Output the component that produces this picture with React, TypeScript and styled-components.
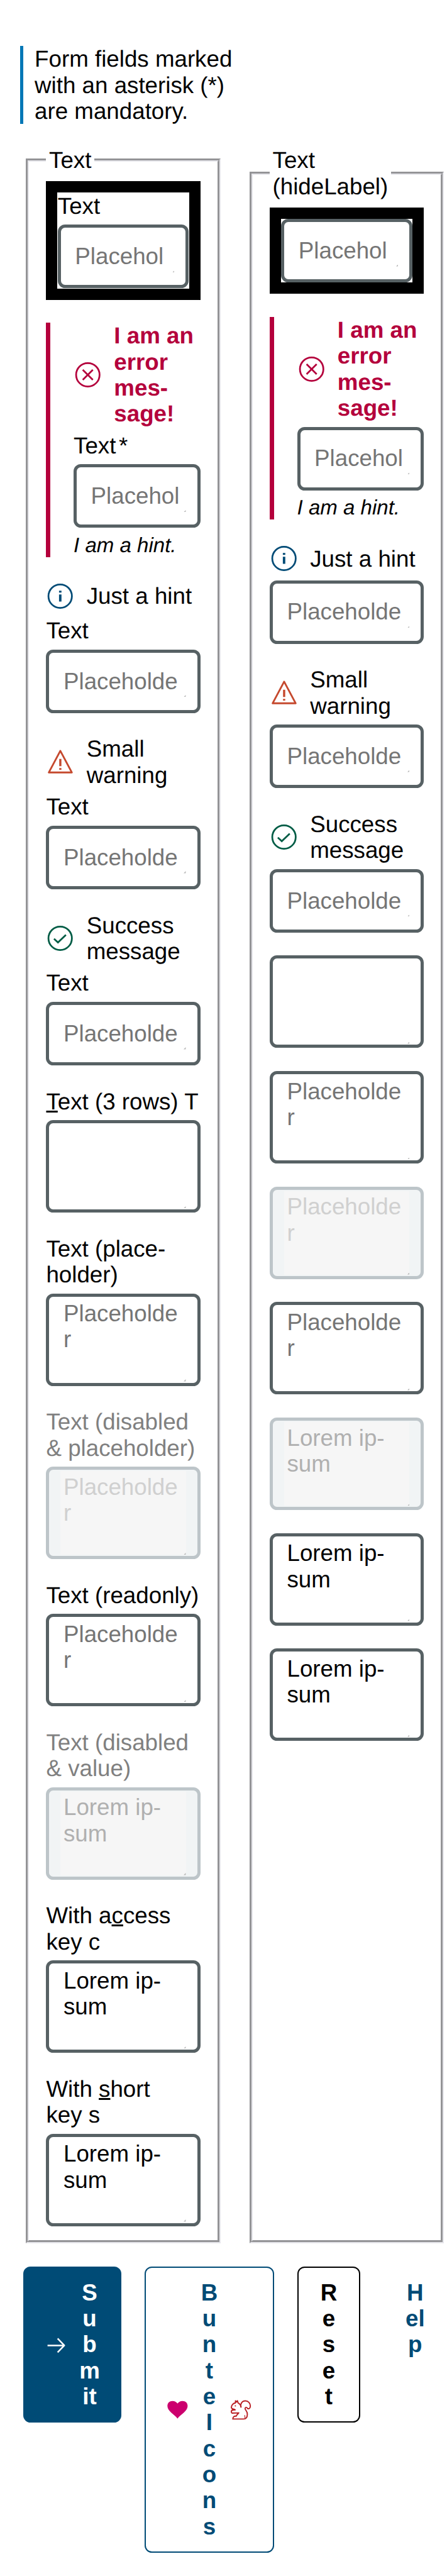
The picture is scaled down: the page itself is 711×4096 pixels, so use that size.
import React from "react";
import styled, { createGlobalStyle, css } from "styled-components";

/* Design units are laid out at a fixed scale of 0.574. */
const SCALE = 0.574;
const u = (n: number) => `${+(n * SCALE).toFixed(3)}px`;

const color = {
  text: "#000000",
  field: "#576164",
  fieldDisabled: "#bdc5c9",
  placeholder: "#757575",
  primary: "#004b76",
  accent: "#0077b6",
  error: "#b4003c",
  warning: "#c5492e",
  success: "#005c45",
};

const GlobalStyle = createGlobalStyle`
  *, *::before, *::after { box-sizing: border-box; }
  body {
    margin: 0;
    background: #ffffff;
    color: ${color.text};
    font-family: "Liberation Sans", Arial, sans-serif;
    font-size: ${u(64)};
    line-height: ${u(72)};
    text-rendering: geometricPrecision;
  }
`;

const Page = styled.main`
  display: flex;
  flex-direction: column;
  gap: ${u(64)};
  padding: ${u(128)} 0 ${u(64)} ${u(56)};
`;

const Notice = styled.p`
  margin: 0;
  width: ${u(620)};
  border-left: 5px solid ${color.accent};
  padding-left: calc(${u(40)} - 5px);
`;

const Columns = styled.form`
  display: grid;
  grid-template-columns: minmax(0, 1fr) minmax(0, 1fr);
  column-gap: ${u(80)};
  padding: 0 ${u(8)} 0 ${u(16)};
`;

const Group = styled.fieldset`
  display: block;
  min-width: 0;
  margin: 0;
  border: 5px groove #e6e6eb;
  padding: ${u(22.4)} calc(${u(56)} - 5px) calc(${u(48)} - 5px);
`;

const GroupTitle = styled.legend`
  padding: 0 ${u(8)};
`;

const Stack = styled.div`
  display: flex;
  flex-direction: column;
  gap: ${u(64)};
`;

const Field = styled.div<{ $state?: "focus" | "error" }>`
  display: flex;
  flex-direction: column;
  gap: ${u(16)};
  ${(p) =>
    p.$state === "focus" &&
    css`
      border: 18px solid #000;
      padding: calc(${u(32)} - 18px);
    `}
  ${(p) =>
    p.$state === "error" &&
    css`
      border-left: 7px solid ${color.error};
      padding-left: calc(${u(76)} - 7px);
    `}
`;

const Label = styled.label<{ $disabled?: boolean }>`
  white-space: nowrap;
  color: ${(p) => (p.$disabled ? "#808080" : "inherit")};
`;

const Required = styled.span`
  margin-left: ${u(8)};
`;

const AccessKey = styled.u`
  text-decoration: underline;
`;

const Hint = styled.p`
  margin: 0;
  font-size: ${u(57.6)};
  font-style: italic;
  line-height: ${u(65.6)};
  white-space: nowrap;
`;

const Message = styled.div<{ $strong?: boolean }>`
  display: flex;
  align-items: center;
  gap: ${u(32)};
  min-height: ${u(87.4)};
  color: ${(p) => (p.$strong ? color.error : "inherit")};
  font-weight: ${(p) => (p.$strong ? 700 : 400)};
`;

const MessageText = styled.span`
  flex: none;
  white-space: nowrap;
`;

const Icon = styled.svg<{ $w: number }>`
  flex: none;
  width: ${(p) => u(p.$w)};
  height: ${u(80)};
  overflow: visible;
`;

const Box = styled.div<{ $rows: number; $disabled?: boolean }>`
  position: relative;
  display: flex;
  align-items: center;
  height: ${(p) => (p.$rows === 1 ? u(176) : u(256))};
  border: 5px solid ${(p) => (p.$disabled ? color.fieldDisabled : color.field)};
  border-radius: ${u(20)};
  padding: 0 calc(${u(40)} - 5px);
  background: ${(p) => (p.$disabled ? "#f1f4f5" : "#fff")};
`;

const Area = styled.textarea`
  display: block;
  width: 100%;
  height: ${(p) => u((p.rows ?? 1) * 72 + 16)};
  margin: 0;
  border: 0;
  outline: 0;
  padding: ${u(8)};
  background: transparent;
  color: inherit;
  font: inherit;
  overflow: hidden;
  resize: none;
  &::placeholder {
    color: ${color.placeholder};
    opacity: 1;
  }
  &:disabled {
    background: #f6f6f6;
    color: #b0b0b0;
  }
  &:disabled::placeholder {
    color: #d0d0d0;
  }
`;

const Grip = styled.svg<{ $rows: number }>`
  position: absolute;
  right: calc(${u(40)} - 5px);
  bottom: calc(${(p) => (p.$rows === 1 ? u(44) : u(12))} - 5px);
  width: ${u(6)};
  height: ${u(6)};
`;

const Actions = styled.div`
  display: flex;
  align-items: flex-start;
  gap: ${u(64)};
  padding-left: ${u(8)};
`;

const Button = styled.button<{ $w: number; $kind: "primary" | "outline" | "plain" | "ghost" }>`
  display: flex;
  flex: none;
  align-items: center;
  justify-content: center;
  gap: ${u(32)};
  width: ${(p) => u(p.$w)};
  margin: 0;
  border: ${(p) => (p.$kind === "plain" ? "2px" : "2.3px")} solid
    ${(p) => (p.$kind === "ghost" ? "transparent" : p.$kind === "plain" ? "#000" : color.primary)};
  border-radius: ${u(20)};
  padding: calc(${u(36)} - 2px) 0;
  background: ${(p) => (p.$kind === "primary" ? color.primary : "transparent")};
  color: ${(p) => (p.$kind === "primary" ? "#fff" : p.$kind === "plain" ? "#000" : color.primary)};
  font: inherit;
  font-weight: 700;
`;

const Word = styled.span<{ $w: number }>`
  flex: none;
  width: ${(p) => u(p.$w)};
  text-align: center;
  word-break: break-all;
`;

type Kind = "error" | "info" | "warning" | "success";

function MessageIcon({ kind }: { kind: Kind }) {
  if (kind === "warning") {
    return (
      <Icon $w={80} viewBox="0 0 80 80">
        <path d="M40 8.5 8 68.5H72Z" fill="none" stroke={color.warning} strokeWidth="5" strokeLinejoin="round" />
        <path d="M37 31h6v20h-6zM37 56h6v5h-6z" fill={color.warning} />
      </Icon>
    );
  }
  return (
    <Icon $w={80} viewBox="0 0 80 80">
      <circle cx="39.6" cy="40" r="32.5" fill="none" stroke={color[kind === "info" ? "primary" : kind]} strokeWidth="4.8" />
      {kind === "error" && (
        <path d="M25.5 26 53.5 54M53.5 26 25.5 54" fill="none" stroke={color.error} strokeWidth="4.8" />
      )}
      {kind === "info" && <path d="M36.4 25h6.8v5.2h-6.8zM36.4 35.2h6.8V55h-6.8z" fill={color.primary} />}
      {kind === "success" && (
        <path d="M22.5 41.5 33.5 51.5 55.5 30.5" fill="none" stroke={color.success} strokeWidth="4.8" />
      )}
    </Icon>
  );
}

function StatusMessage({ kind, lines }: { kind: Kind; lines: string[] }) {
  return (
    <Message $strong={kind === "error"}>
      <MessageIcon kind={kind} />
      <MessageText>
        {lines.map((line, i) => (
          <React.Fragment key={i}>
            {i > 0 && <br />}
            {line}
          </React.Fragment>
        ))}
      </MessageText>
    </Message>
  );
}

type AreaFieldProps = {
  label?: React.ReactNode;
  rows?: number;
  placeholder?: string;
  value?: string;
  disabled?: boolean;
  readOnly?: boolean;
  state?: "focus" | "error";
  message?: { kind: Kind; lines: string[] };
  hint?: string;
};

function AreaField({ label, rows = 3, placeholder, value, disabled, readOnly, state, message, hint }: AreaFieldProps) {
  return (
    <Field $state={state}>
      {message && <StatusMessage {...message} />}
      {label && <Label $disabled={disabled}>{label}</Label>}
      <Box $rows={rows} $disabled={disabled}>
        <Area rows={rows} placeholder={placeholder} defaultValue={value} disabled={disabled} readOnly={readOnly} />
        <Grip $rows={rows} viewBox="0 0 6 6">
          <path d="M6 0V6H0Z" fill="#b8b8b8" />
        </Grip>
      </Box>
      {hint && <Hint>{hint}</Hint>}
    </Field>
  );
}

const PLACEHOLDER = "Placeholder";
const LOREM = "Lorem ip\u00adsum";

const messages = {
  error: { kind: "error" as Kind, lines: ["I am an", "error", "mes-", "sage!"] },
  info: { kind: "info" as Kind, lines: ["Just a hint"] },
  warning: { kind: "warning" as Kind, lines: ["Small", "warning"] },
  success: { kind: "success" as Kind, lines: ["Success", "message"] },
};

export default function App() {
  return (
    <>
      <GlobalStyle />
      <Page>
        <Notice>
          Form fields marked
          <br />
          with an asterisk (*)
          <br />
          are mandatory.
        </Notice>
        <Columns>
          <Group>
            <GroupTitle>Text</GroupTitle>
            <Stack>
              <AreaField state="focus" rows={1} label="Text" placeholder={PLACEHOLDER} />
              <AreaField
                state="error"
                rows={1}
                message={messages.error}
                label={
                  <>
                    Text<Required>*</Required>
                  </>
                }
                placeholder={PLACEHOLDER}
                hint="I am a hint."
              />
              <AreaField rows={1} message={messages.info} label="Text" placeholder={PLACEHOLDER} />
              <AreaField rows={1} message={messages.warning} label="Text" placeholder={PLACEHOLDER} />
              <AreaField rows={1} message={messages.success} label="Text" placeholder={PLACEHOLDER} />
              <AreaField
                label={
                  <>
                    <AccessKey>T</AccessKey>ext (3 rows) T
                  </>
                }
              />
              <AreaField label={<>Text (place-<br />holder)</>} placeholder={PLACEHOLDER} />
              <AreaField label={<>Text (disabled<br />&amp; placeholder)</>} placeholder={PLACEHOLDER} disabled />
              <AreaField label="Text (readonly)" placeholder={PLACEHOLDER} readOnly />
              <AreaField label={<>Text (disabled<br />&amp; value)</>} value={LOREM} disabled />
              <AreaField label={<>With a<AccessKey>c</AccessKey>cess<br />key c</>} value={LOREM} />
              <AreaField label={<>With <AccessKey>s</AccessKey>hort<br />key s</>} value={LOREM} />
            </Stack>
          </Group>
          <Group>
            <GroupTitle>
              Text
              <br />
              (hideLabel)
            </GroupTitle>
            <Stack>
              <AreaField state="focus" rows={1} placeholder={PLACEHOLDER} />
              <AreaField state="error" rows={1} message={messages.error} placeholder={PLACEHOLDER} hint="I am a hint." />
              <AreaField rows={1} message={messages.info} placeholder={PLACEHOLDER} />
              <AreaField rows={1} message={messages.warning} placeholder={PLACEHOLDER} />
              <AreaField rows={1} message={messages.success} placeholder={PLACEHOLDER} />
              <AreaField />
              <AreaField placeholder={PLACEHOLDER} />
              <AreaField placeholder={PLACEHOLDER} disabled />
              <AreaField placeholder={PLACEHOLDER} readOnly />
              <AreaField value={LOREM} disabled />
              <AreaField value={LOREM} />
              <AreaField value={LOREM} />
            </Stack>
          </Group>
        </Columns>
        <Actions>
          <Button $kind="primary" $w={272.6}>
            <Icon $w={64} viewBox="0 0 64 80">
              <path d="M8 42.5H55M36 23.5 54.5 42.5 36 61.5" fill="none" stroke="#fff" strokeWidth="4.4" strokeLinejoin="round" />
            </Icon>
            <Word $w={57.5}>Submit</Word>
          </Button>
          <Button $kind="outline" $w={358.8}>
            <Icon $w={64} viewBox="0 0 64 80">
              <path
                d="M32 66C24 54 4 46 4 31C4 22 10 17 18 17C25 17 29 20 32 24C35 20 39 17 46 17C54 17 60 22 60 31C60 46 40 54 32 66Z"
                fill="#cc006e"
              />
            </Icon>
            <Word $w={47}>Bunte Icons</Word>
            <Icon $w={64} viewBox="0 0 64 80">
              <g transform="translate(-3.4 5.6) scale(.3333)" fill="none" stroke="#b91e22" strokeWidth="10" strokeLinejoin="round" strokeLinecap="round">
                <path d="M106 84C98 54 118 33 142 33C168 33 184 54 184 76C184 94 172 102 160 96C158 86 140 82 140 98C142 112 160 118 159 145C158 170 146 184 128 184L38 184C38 164 52 158 66 160C72 146 80 142 88 133L32 135C22 126 24 114 34 110" />
                <path d="M34 110L58 108C50 100 26 104 26 88C26 68 42 52 60 50L60 32L68 42L76 32L82 50C94 56 104 66 106 84" />
                <path d="M137 153L140 180" strokeWidth="6" />
                <circle cx="59" cy="75" r="5.5" fill="#b91e22" stroke="none" />
              </g>
            </Icon>
          </Button>
          <Button $kind="plain" $w={175.4}>
            <Word $w={47}>Reset</Word>
          </Button>
          <Button $kind="ghost" $w={175.4}>
            <Word $w={57.5}>Help</Word>
          </Button>
        </Actions>
      </Page>
    </>
  );
}
